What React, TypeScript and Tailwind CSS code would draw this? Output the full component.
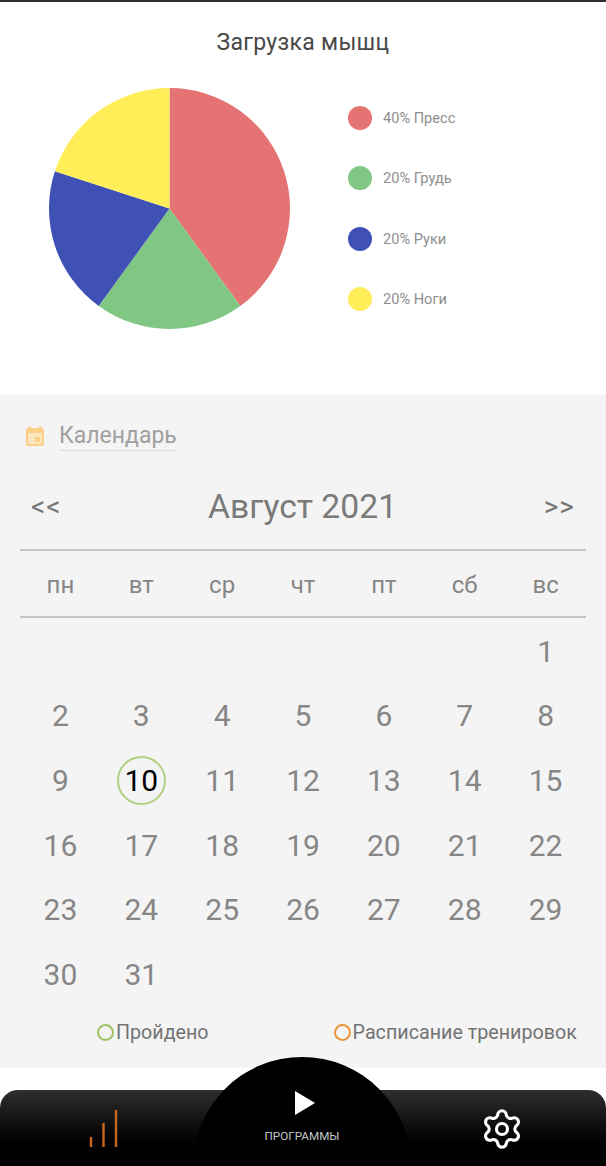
import { Settings } from "lucide-react"

const legend = [
  { label: "40% Пресс", color: "bg-[#e57373]" },
  { label: "20% Грудь", color: "bg-[#81c784]" },
  { label: "20% Руки", color: "bg-[#3f51b5]" },
  { label: "20% Ноги", color: "bg-[#ffee58]" },
]

const weekDays = ["пн", "вт", "ср", "чт", "пт", "сб", "вс"]

// август 2021 начинается с воскресенья
const days: (number | null)[] = [
  ...Array(6).fill(null),
  ...Array.from({ length: 31 }, (_, i) => i + 1),
]

function PieChart() {
  return (
    <svg width="241" height="241" viewBox="0 0 242 242" className="shrink-0">
      <path d="M121 121 L121 0 A121 121 0 0 1 192.1 218.9 Z" fill="#e57373" />
      <path d="M121 121 L192.1 218.9 A121 121 0 0 1 49.9 218.9 Z" fill="#81c784" />
      <path d="M121 121 L49.9 218.9 A121 121 0 0 1 5.9 83.6 Z" fill="#3f51b5" />
      <path d="M121 121 L5.9 83.6 A121 121 0 0 1 121 0 Z" fill="#ffee58" />
    </svg>
  )
}

function EventIcon() {
  return (
    <svg width="24" height="24" viewBox="0 0 24 24" className="shrink-0">
      <path d="M5 7h14v13H5z" fill="#fde6bd" />
      <path
        d="M17 12h-5v5h5v-5zM16 1v2H8V1H6v2H5c-1.11 0-1.99.9-1.99 2L3 19c0 1.1.89 2 2 2h14c1.1 0 2-.9 2-2V5c0-1.1-.9-2-2-2h-1V1h-2zm3 18H5V8h14v11z"
        fill="#fbcf85"
      />
    </svg>
  )
}

export default function App() {
  return (
    <div className="h-[1166px] w-[606px] overflow-hidden bg-white font-['Roboto',sans-serif]">
      <div className="h-[2px] bg-[#2e2e2e]" />

      {/* Загрузка мышц */}
      <section className="h-[393px] pt-[27px]">
        <h2 className="text-center text-[23px] leading-[28px] tracking-[0.3px] text-[#484848]">Загрузка мышц</h2>
        <div className="mt-[31px] flex items-center pl-[48.5px]">
          <PieChart />
          <ul className="ml-[58.5px] flex flex-col gap-[36.5px]">
            {legend.map((item) => (
              <li key={item.label} className="flex items-center gap-[11px]">
                <span className={`h-6 w-6 rounded-full ${item.color}`} />
                <span className="text-[14.6px] leading-6 text-[#8e8e8e]">{item.label}</span>
              </li>
            ))}
          </ul>
        </div>
      </section>

      {/* Календарь */}
      <section className="h-[673px] bg-[#f4f4f4] px-5 pt-[27px]">
        <div className="flex items-center gap-[12px] pl-[3px]">
          <EventIcon />
          <span className="border-b border-[#dddddd] text-[23px] leading-[28px] text-[#a0a0a0]">Календарь</span>
        </div>

        <div className="mt-[34px] flex h-[66px] items-start justify-between border-b-2 border-[#c4c4c4] px-[11px]">
          <span className="text-[28px] leading-[44px] tracking-[1px] text-[#777777]">&lt;&lt;</span>
          <span className="text-[33.7px] leading-[44px] text-[#7a7a7a]">Август 2021</span>
          <span className="text-[28px] leading-[44px] tracking-[1px] text-[#777777]">&gt;&gt;</span>
        </div>

        <div className="grid h-[67px] grid-cols-7 items-center border-b-2 border-[#c4c4c4] pt-[2px]">
          {weekDays.map((d) => (
            <span key={d} className="text-center text-[24px] leading-[30px] text-[#868686]">{d}</span>
          ))}
        </div>

        <div className="grid auto-rows-[64.6px] grid-cols-7 items-center pt-[1px]">
          {days.map((d, i) => (
            <div key={i} className="flex items-center justify-center">
              {d === 10 ? (
                <span className="flex h-[49px] w-[49px] items-center justify-center rounded-full border-2 border-[#aed080] text-[30px] text-black">
                  {d}
                </span>
              ) : (
                <span className="text-[30px] leading-[49px] text-[#868686]">{d}</span>
              )}
            </div>
          ))}
        </div>

        <div className="mt-[12px] flex items-center pl-[77px] text-[19.7px] leading-[28px] text-[#737373]">
          <span className="h-[17px] w-[17px] rounded-full border-2 border-[#9bc266]" />
          <span className="ml-[2px]">Пройдено</span>
          <span className="ml-[125px] h-[17px] w-[17px] rounded-full border-2 border-[#e8963a]" />
          <span className="ml-[2px] whitespace-nowrap">Расписание тренировок</span>
        </div>
      </section>

      {/* Нижняя навигация */}
      <nav className="relative mt-[22px] flex h-[76px] items-start rounded-t-[18px] bg-gradient-to-b from-[#2f2f2f] to-black">
        <svg width="32" height="38" viewBox="0 0 32 38" className="ml-[88px] mt-[20px]">
          <path d="M3 27v10M15.5 13v24M28 0v37" stroke="#c8651b" strokeWidth="2.4" fill="none" />
        </svg>
        <Settings size={44} strokeWidth={1.7} className="ml-[360px] mt-[17px] text-white" />

        <div className="absolute left-[193px] top-[-33px] flex h-[218px] w-[218px] flex-col items-center rounded-full bg-black pt-[34px]">
          <svg width="20" height="24" viewBox="0 0 20 24" className="ml-[5px]">
            <path d="M0 0L20 12L0 24Z" fill="white" />
          </svg>
          <span className="mt-[12px] text-[11.7px] leading-[18px] text-[#c8c8c8]">ПРОГРАММЫ</span>
        </div>
      </nav>
    </div>
  )
}
